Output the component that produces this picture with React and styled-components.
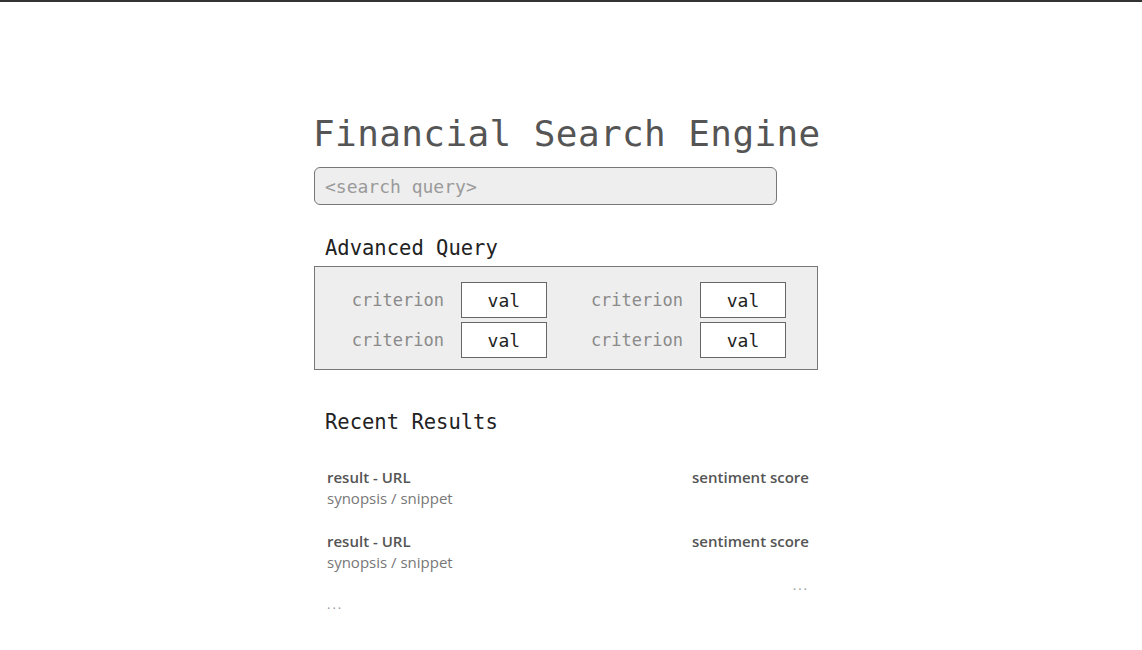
import React from "react";
import styled, { createGlobalStyle } from "styled-components";

const GlobalStyle = createGlobalStyle`
  html, body {
    margin: 0;
    padding: 0;
    background: #ffffff;
  }
  * {
    box-sizing: border-box;
  }
`;

const criteria = [
  { label: "criterion", value: "val" },
  { label: "criterion", value: "val" },
  { label: "criterion", value: "val" },
  { label: "criterion", value: "val" },
];

const results = [
  { title: "result - URL", snippet: "synopsis / snippet", score: "sentiment score" },
  { title: "result - URL", snippet: "synopsis / snippet", score: "sentiment score" },
];

export default function App() {
  return (
    <>
      <GlobalStyle />
      <Page>
        <Column>
          <Title>Financial Search Engine</Title>
          <SearchBox placeholder="<search query>" />

          <SectionLabel>Advanced Query</SectionLabel>
          <QueryPanel>
            {criteria.map((c, i) => (
              <Criterion key={i}>
                <CriterionLabel>{c.label}</CriterionLabel>
                <ValueBox>{c.value}</ValueBox>
              </Criterion>
            ))}
          </QueryPanel>

          <SectionLabel spaced>Recent Results</SectionLabel>
          <ResultList>
            {results.map((r, i) => (
              <Result key={i}>
                <ResultHead>
                  <ResultTitle>{r.title}</ResultTitle>
                  <ResultTitle>{r.score}</ResultTitle>
                </ResultHead>
                <Snippet>{r.snippet}</Snippet>
              </Result>
            ))}
            <Ellipsis right>...</Ellipsis>
            <Ellipsis>...</Ellipsis>
          </ResultList>
        </Column>
      </Page>
    </>
  );
}

const Page = styled.div`
  min-height: 650px;
  border-top: 2px solid #333333;
  padding-top: 112px;
  font-family: "DejaVu Sans Mono", "Liberation Mono", monospace;
`;

const Column = styled.div`
  width: 504px;
  margin-left: 314px;
  display: flex;
  flex-direction: column;
`;

const Title = styled.h1`
  margin: 0 0 0 -1px;
  font-size: 36px;
  font-weight: 400;
  line-height: 40px;
  color: #555555;
  letter-spacing: 0.4px;
  white-space: nowrap;
`;

const SearchBox = styled.input`
  margin-top: 13px;
  width: 463px;
  height: 38px;
  padding: 0 10px;
  border: 1px solid #777777;
  border-radius: 6px;
  background: #eeeeee;
  font-family: inherit;
  font-size: 18px;
  color: #333333;
  outline: none;
  &::placeholder {
    color: #9a9a9a;
  }
`;

const SectionLabel = styled.h2`
  margin: ${({ spaced }) => (spaced ? "40px 0 0 11px" : "31px 0 0 11px")};
  font-size: 20.5px;
  font-weight: 400;
  line-height: 24px;
  color: #222222;
`;

const QueryPanel = styled.div`
  margin-top: 6px;
  height: 104px;
  padding: 15px 31px 0 36px;
  border: 1px solid #777777;
  background: #eeeeee;
  display: grid;
  grid-template-columns: 1fr auto;
  column-gap: 44px;
  row-gap: 4px;
  align-content: start;
`;

const Criterion = styled.div`
  display: flex;
  align-items: center;
  justify-content: flex-end;
  gap: 17px;
`;

const CriterionLabel = styled.span`
  font-size: 17px;
  color: #8a8a8a;
`;

const ValueBox = styled.div`
  width: 86px;
  height: 36px;
  border: 1px solid #666666;
  background: #ffffff;
  display: flex;
  align-items: center;
  justify-content: center;
  font-size: 18px;
  color: #222222;
`;

const ResultList = styled.div`
  margin-top: 33px;
  padding: 0 9px 0 13px;
  display: flex;
  flex-direction: column;
  gap: 22px;
  font-family: "Open Sans", "Liberation Sans", sans-serif;
`;

const Result = styled.div`
  display: flex;
  flex-direction: column;
`;

const ResultHead = styled.div`
  display: flex;
  justify-content: space-between;
  line-height: 20px;
`;

const ResultTitle = styled.span`
  font-size: 15px;
  font-weight: 600;
  color: #555555;
`;

const Snippet = styled.div`
  font-size: 15px;
  line-height: 22px;
  color: #777777;
`;

const Ellipsis = styled.div`
  font-size: 13px;
  line-height: 14px;
  color: #999999;
  letter-spacing: 2px;
  text-align: ${({ right }) => (right ? "right" : "left")};
  margin-top: -17px;
`;
